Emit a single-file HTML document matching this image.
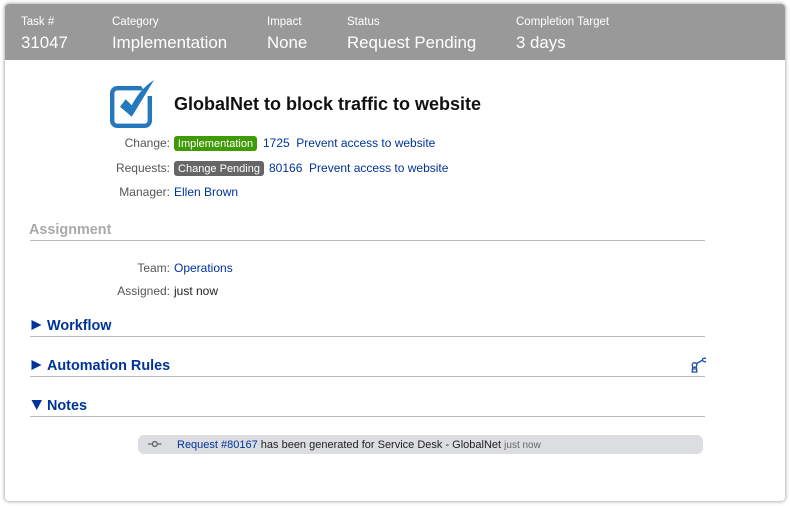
<!DOCTYPE html>
<html>
<head>
<meta charset="utf-8">
<style>
html,body{margin:0;padding:0;width:790px;height:506px;overflow:hidden;background:#fff;font-family:"Liberation Sans",Arial,sans-serif;}
#card{position:absolute;left:5px;top:4px;width:780px;height:497px;background:#fff;border-radius:4px;box-shadow:0 0 3px 1px rgba(0,0,0,.3);}
#hdr{position:absolute;left:5px;top:4px;width:780px;height:56px;background:#999;border-radius:4px 4px 0 0;}
.t{position:absolute;white-space:nowrap;line-height:16px;}
.hl{font-size:11.5px;color:#fff;top:14px;}
.hv{font-size:16.85px;color:#fff;top:34px;line-height:18px;}
.lab{font-size:12px;color:#555;text-align:right;width:150px;left:20px;}
.val{font-size:12px;color:#003399;}
.blk{color:#222;}
.badge{position:absolute;font-size:11px;color:#fff;border-radius:3px;height:15px;line-height:16px;text-align:center;}
.rule{position:absolute;left:30px;width:675px;height:1px;background:#bbb;}
.sec{font-size:14.4px;font-weight:bold;color:#003399;left:47px;}
svg{position:absolute;}
</style>
</head>
<body>
<div id="card"></div>
<div id="hdr"></div>

<div class="t hl" style="left:21px">Task #</div>
<div class="t hv" style="left:21px">31047</div>
<div class="t hl" style="left:112px">Category</div>
<div class="t hv" style="left:112px">Implementation</div>
<div class="t hl" style="left:267px">Impact</div>
<div class="t hv" style="left:267px">None</div>
<div class="t hl" style="left:347px">Status</div>
<div class="t hv" style="left:347px">Request Pending</div>
<div class="t hl" style="left:516px">Completion Target</div>
<div class="t hv" style="left:516px">3 days</div>

<svg style="left:108px;top:78px" width="48" height="52" viewBox="0 0 48 52">
<rect x="4.2" y="10.2" width="37.6" height="37.6" rx="5" fill="none" stroke="#2479be" stroke-width="4.4"/>
<path d="M32 6 L48 6 L48 18 L39 18 Z" fill="#fff"/>
<path d="M46 2 Q32 11 23.7 27.3 L17.7 21.3 L12 28.7 L23.7 38.7 Q34 22 46 2 Z" fill="#2479be"/>
</svg>

<div class="t" style="left:174px;top:94px;font-size:18px;font-weight:bold;color:#111;line-height:20px">GlobalNet to block traffic to website</div>

<div class="t lab" style="top:135px">Change:</div>
<div class="badge" style="left:174px;top:136px;width:83px;background:#3f9a06">Implementation</div>
<div class="t val" style="left:263px;top:135px;font-size:11.97px">1725&nbsp; Prevent access to website</div>

<div class="t lab" style="top:160px">Requests:</div>
<div class="badge" style="left:174px;top:161px;width:90px;background:#666">Change Pending</div>
<div class="t val" style="left:269px;top:160px">80166&nbsp; Prevent access to website</div>

<div class="t lab" style="top:184px">Manager:</div>
<div class="t val" style="left:174px;top:184px">Ellen Brown</div>

<div class="t" style="left:29px;top:222px;font-size:14.4px;font-weight:bold;color:#aaa">Assignment</div>
<div class="rule" style="top:240px"></div>

<div class="t lab" style="top:260px">Team:</div>
<div class="t val" style="left:174px;top:260px">Operations</div>
<div class="t lab" style="top:283px">Assigned:</div>
<div class="t val blk" style="left:174px;top:283px">just now</div>

<svg style="left:31px;top:320px" width="11" height="10"><path d="M0.5 0 L10.5 5 L0.5 10 Z" fill="#003399"/></svg>
<div class="t sec" style="top:318px">Workflow</div>
<div class="rule" style="top:336px"></div>

<svg style="left:31px;top:360px" width="11" height="10"><path d="M0.5 0 L10.5 5 L0.5 10 Z" fill="#003399"/></svg>
<div class="t sec" style="top:358px">Automation Rules</div>
<div class="rule" style="top:376px"></div>

<svg style="left:690px;top:357px" width="16" height="16" viewBox="0 0 16 16">
<circle cx="4.5" cy="8" r="2.3" fill="none" stroke="#1a4da0" stroke-width="1.3"/>
<path d="M6.5 6.5 L12 3.5 M16 1.2 Q12 1 12.5 3 Q13 5 16 4.8 M2.7 10 L2.2 14.5 M6.3 10 L6.8 14.5 M1.5 15 H7.5 M2.5 12 H6.5" fill="none" stroke="#1a4da0" stroke-width="1.3"/>
</svg>

<svg style="left:31px;top:400px" width="12" height="10"><path d="M0.5 0 L11 0 L5.75 10 Z" fill="#003399"/></svg>
<div class="t sec" style="top:398px">Notes</div>
<div class="rule" style="top:416px"></div>

<div style="position:absolute;left:138px;top:435px;width:565px;height:19px;background:#dcdde0;border-radius:6px"></div>
<svg style="left:148px;top:439px" width="14" height="10" viewBox="0 0 14 10">
<path d="M0 5 H3.5 M10 5 H13.5" stroke="#666" stroke-width="1.2"/>
<circle cx="6.8" cy="5" r="2.4" fill="none" stroke="#666" stroke-width="1.4"/>
</svg>
<div class="t" style="left:177px;top:437px;font-size:11px;color:#222"><span style="color:#003399">Request #80167</span> has been generated for Service Desk - GlobalNet <span style="color:#666;font-size:10px">just now</span></div>
</body>
</html>
